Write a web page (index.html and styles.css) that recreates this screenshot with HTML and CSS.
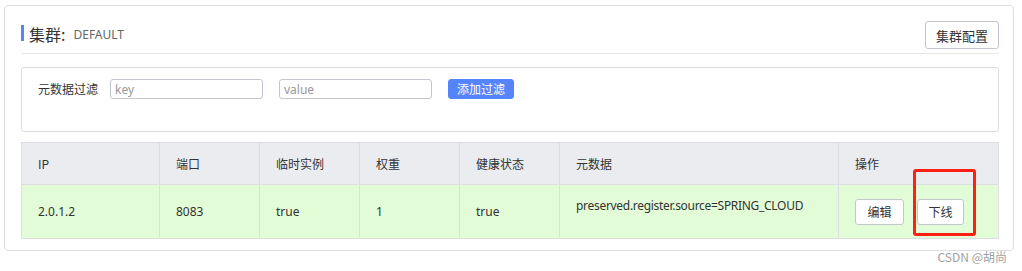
FILE: index.html
```html
<!DOCTYPE html>
<html lang="zh-CN">
<head>
<meta charset="utf-8">
<title>集群 DEFAULT</title>
<link rel="stylesheet" href="styles.css">
</head>
<body>
<div class="card">
  <div class="card-head">
    <div class="title">
      <span class="title-bar"></span>
      <span class="title-main">集群:</span>
      <span class="title-sub">DEFAULT</span>
    </div>
    <button class="btn btn-normal btn-config">集群配置</button>
  </div>

  <div class="filter-box">
    <span class="filter-label">元数据过滤</span>
    <input class="filter-input" type="text" placeholder="key">
    <input class="filter-input" type="text" placeholder="value">
    <button class="btn btn-primary">添加过滤</button>
  </div>

  <table class="inst-table">
    <colgroup>
      <col class="c-ip"><col class="c-port"><col class="c-eph"><col class="c-weight"><col class="c-health"><col class="c-meta"><col class="c-op">
    </colgroup>
    <thead>
      <tr>
        <th>IP</th><th>端口</th><th>临时实例</th><th>权重</th><th>健康状态</th><th>元数据</th><th>操作</th>
      </tr>
    </thead>
    <tbody>
      <tr>
        <td>2.0.1.2</td>
        <td>8083</td>
        <td>true</td>
        <td>1</td>
        <td>true</td>
        <td class="meta-cell">preserved.register.source=SPRING_CLOUD</td>
        <td class="op-cell">
          <button class="btn btn-normal btn-op">编辑</button>
          <span class="mark-wrap">
            <button class="btn btn-normal btn-op btn-off">下线</button>
            <span class="red-mark"></span>
          </span>
        </td>
      </tr>
    </tbody>
  </table>
</div>
<div class="watermark">CSDN @胡尚</div>
</body>
</html>
```

FILE: styles.css
```css
html, body {
  margin: 0;
  padding: 0;
  background: #ffffff;
}

body {
  font-family: "Noto Sans", "Noto Sans CJK SC", sans-serif;
  color: #333333;
  font-size: 12px;
  position: relative;
  height: 271px;
  overflow: hidden;
}

.card {
  margin: 5px 8px 0 4px;
  border: 1px solid #dcdee3;
  border-radius: 4px;
  padding: 0 14px 11px 16px;
  box-sizing: border-box;
  height: 246px;
}

.card-head {
  display: flex;
  justify-content: space-between;
  align-items: flex-start;
  padding-top: 15px;
  padding-bottom: 4px;
  border-bottom: 1px solid #e6e7eb;
}

.title {
  display: flex;
  align-items: center;
  margin-top: 4px;
  height: 16px;
}

.title-bar {
  width: 3px;
  height: 16px;
  background: #5584ff;
  margin-right: 5px;
}

.title-main {
  font-family: "Noto Sans CJK SC", sans-serif;
  font-size: 16px;
  line-height: 16px;
  color: #333333;
  padding-top: 2px;
}

.title-sub {
  font-size: 12px;
  color: #666666;
  margin-left: 8px;
  line-height: 16px;
  padding-top: 3px;
}

.btn {
  font-family: "Noto Sans CJK SC", sans-serif;
  border-radius: 3px;
  cursor: pointer;
  padding: 0;
  box-sizing: border-box;
}

.btn-normal {
  background: #ffffff;
  border: 1px solid #c4c6cf;
  color: #333333;
}

.btn-config {
  width: 74px;
  height: 28px;
  font-size: 13px;
}

.btn-primary {
  background: #5584ff;
  border: 1px solid #5584ff;
  color: #ffffff;
  width: 66px;
  height: 20px;
  font-size: 12px;
  line-height: 18px;
}

.filter-box {
  margin-top: 13px;
  height: 65px;
  box-sizing: border-box;
  border: 1px solid #dcdee3;
  border-radius: 3px;
  display: flex;
  align-items: flex-start;
  padding: 11px 0 0 16px;
}

.filter-label {
  font-family: "Noto Sans CJK SC", sans-serif;
  font-size: 12px;
  line-height: 20px;
  color: #333333;
  margin-right: 12px;
}

.filter-input {
  width: 153px;
  height: 20px;
  box-sizing: border-box;
  border: 1px solid #c4c6cf;
  border-radius: 3px;
  padding: 0 4px;
  font-family: "Noto Sans", sans-serif;
  font-size: 12px;
  color: #333333;
  margin: 0 16px 0 0;
  outline: none;
}

.filter-input::placeholder {
  color: #999999;
}

.inst-table {
  margin-top: 10px;
  width: 977px;
  border-collapse: collapse;
  table-layout: fixed;
}

.c-ip { width: 138px; }
.c-port { width: 100px; }
.c-eph { width: 100px; }
.c-weight { width: 100px; }
.c-health { width: 100px; }
.c-meta { width: 279px; }
.c-op { width: 160px; }

.inst-table th,
.inst-table td {
  border: 1px solid #dcdee3;
  text-align: left;
  padding: 0 0 0 16px;
  font-size: 12px;
  font-weight: normal;
  color: #333333;
}

.inst-table th {
  background: #ebecf0;
  height: 41px;
  font-family: "Noto Sans CJK SC", sans-serif;
}

.inst-table td {
  background: #e3fcd8;
  height: 53px;
  font-family: "Noto Sans", "Noto Sans CJK SC", sans-serif;
}

.inst-table td.meta-cell {
  vertical-align: top;
  padding-top: 13px;
  height: 40px;
  line-height: 16px;
  white-space: nowrap;
  letter-spacing: -0.3px;
}

.op-cell {
  white-space: nowrap;
}

.btn-op {
  width: 49px;
  height: 26px;
  font-size: 12px;
  vertical-align: middle;
}

.btn-off {
  width: 47px;
}

.mark-wrap {
  position: relative;
  display: inline-block;
  margin-left: 10px;
  vertical-align: middle;
}

.mark-wrap .btn-off {
  display: block;
}

.red-mark {
  position: absolute;
  left: -4px;
  top: -30px;
  width: 63px;
  height: 67px;
  box-sizing: border-box;
  border: 3px solid #ff1f14;
  border-radius: 3px;
  pointer-events: none;
}

.watermark {
  position: absolute;
  right: 15px;
  top: 248px;
  font-family: "Noto Sans CJK SC", sans-serif;
  font-size: 12px;
  color: #a0a0a0;
}
```
